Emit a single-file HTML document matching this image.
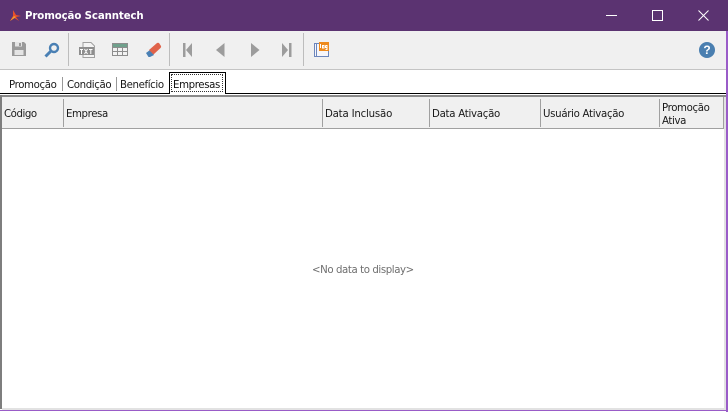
<!DOCTYPE html>
<html><head><meta charset="utf-8">
<style>
html,body{margin:0;padding:0;background:#fff}
#w{position:relative;width:728px;height:412px;overflow:hidden;background:#fff;font-family:"DejaVu Sans","Liberation Sans",sans-serif;font-size:10px;color:#1a1a1a}
.a{position:absolute}
.t{position:absolute;white-space:nowrap;font-size:10.2px;line-height:13px;letter-spacing:-.37px}
.s{position:absolute;width:1px;background:#bdbdbd}
.h{position:absolute;width:1px;background:#a0a0a0;top:99px;height:28px}
svg{position:absolute;overflow:visible}
</style></head><body><div id="w">
<div class="a" style="left:0;top:0;width:728px;height:31px;background:#5b3371"></div>
<svg style="left:9px;top:9px" width="13" height="13" viewBox="0 0 13 13"><path d="M4 1 L7 6 L12 7 L7 8 L10 12 L5.500 9 L1 12 L4 7 Z" fill="#e8502a"/><path d="M1 12 L5 7 L7 8 Z" fill="#f0a030"/></svg>
<div class="t" style="left:25px;top:10px;font-weight:bold;color:#fff;letter-spacing:-.1px">Promoção Scanntech</div>
<div class="a" style="left:606px;top:15px;width:11px;height:1px;background:#fff"></div>
<div class="a" style="left:652px;top:10px;width:9px;height:9px;border:1px solid #fff"></div>
<svg style="left:698px;top:10px" width="11" height="11"><path d="M.5 .5 L10.500 10.500 M10.500 .5 L.5 10.500" stroke="#fff" stroke-width="1" fill="none"/></svg>

<div class="a" style="left:0;top:31px;width:726px;height:38px;background:#f0f0f0"></div>
<div class="a" style="left:0;top:69px;width:726px;height:1px;background:#c4c4c4"></div>
<div class="s" style="left:68px;top:33px;height:33px"></div>
<div class="s" style="left:169px;top:33px;height:33px"></div>
<div class="s" style="left:303px;top:33px;height:33px"></div>

<svg style="left:12px;top:42px" width="15" height="15"><path d="M0 0 H12 L14 2 V14 H0 Z" fill="#9a9a9a"/><rect x="3" y="0" width="7" height="4.500" fill="#e4e4e4"/><rect x="7" y="1" width="2" height="3" fill="#9a9a9a"/><rect x="2.500" y="8" width="9" height="5" fill="#e4e4e4"/></svg>
<svg style="left:44px;top:42px" width="16" height="16"><circle cx="10" cy="6" r="4" fill="none" stroke="#4a80b4" stroke-width="2.400"/><path d="M7 9 L1.500 14.500" stroke="#4a80b4" stroke-width="3" fill="none"/></svg>
<svg style="left:79px;top:42px" width="17" height="16"><path d="M4 .5 H12 L15.500 4 V15.500 H4 Z" fill="#f4f4f4" stroke="#a0a0a0"/><rect x="0" y="5" width="15" height="8" fill="#8e8e8e"/><path d="M1 7.500 H4 M2.500 7.500 V12 M5.500 7 L8.500 12 M8.500 7 L5.500 12 M10 7.500 H13.500 M11.800 7.500 V12" stroke="#fff" stroke-width="1" fill="none"/></svg>
<svg style="left:112px;top:43px" width="16" height="14"><rect x="0" y="0" width="16" height="13" fill="#8d8d8d"/><rect x="1" y="1" width="14" height="3" fill="#6fa08c"/><g fill="#f2f2f2"><rect x="1" y="5" width="4" height="3"/><rect x="6" y="5" width="4" height="3"/><rect x="11" y="5" width="4" height="3"/><rect x="1" y="9" width="4" height="3"/><rect x="6" y="9" width="4" height="3"/><rect x="11" y="9" width="4" height="3"/></g></svg>
<svg style="left:145px;top:42px" width="17" height="16"><path d="M1 11 L5 8 L9 13 L5 15 H3.500 Z" fill="#4a80b4"/><path d="M4 8 L12 1 Q13 .5 14 1 L16 4 Q16.500 5 15.500 6 L8.500 12.500 Z" fill="#e0634a"/></svg>

<svg style="left:183px;top:43px" width="10" height="14"><path d="M0 0 H2.500 V14 H0 Z M9 0 V14 L3 7 Z" fill="#9c9c9c"/></svg>
<svg style="left:216px;top:43px" width="9" height="14"><path d="M8.500 0 V14 L0 7 Z" fill="#9c9c9c"/></svg>
<svg style="left:251px;top:43px" width="9" height="14"><path d="M0 0 V14 L8.500 7 Z" fill="#9c9c9c"/></svg>
<svg style="left:282px;top:43px" width="10" height="14"><path d="M0 0 V14 L6 7 Z M7 0 H9.500 V14 H7 Z" fill="#9c9c9c"/></svg>
<svg style="left:314px;top:42px" width="16" height="16"><rect x=".5" y="1.500" width="14" height="13" fill="#f6f6fa" stroke="#6c86bc"/><path d="M2.500 2 V14" stroke="#6c86bc"/><rect x="5" y="0" width="10" height="9" fill="#ee8a1c"/><path d="M6.500 2 V6 M8.500 3.500 H10 V6 H8.500 Z M11.500 3.500 H13 V7.500 H11.500 M11.500 3.500 V5.500 H13" stroke="#fff" stroke-width="1" fill="none"/></svg>
<div class="a" style="left:699px;top:42px;width:16px;height:16px;border-radius:50%;background:#4a7fb0;color:#fff;font:bold 12px/16px 'Liberation Sans',sans-serif;text-align:center">?</div>

<div class="a" style="left:0;top:93px;width:726px;height:1px;background:#000"></div>
<div class="a" style="left:169px;top:72px;width:55px;height:21px;background:#fff;border:1px solid #000;border-bottom:none;box-sizing:content-box"></div>
<div class="a" style="left:171px;top:74px;width:52px;height:18px;border:1px dotted #333;box-sizing:border-box"></div>
<div class="a" style="left:170px;top:93px;width:55px;height:1px;background:#fff"></div>
<div class="t" style="left:9px;top:79px">Promoção</div>
<div class="a" style="left:62px;top:77px;width:1px;height:14px;background:#999"></div>
<div class="t" style="left:67px;top:79px">Condição</div>
<div class="a" style="left:116px;top:77px;width:1px;height:14px;background:#999"></div>
<div class="t" style="left:120px;top:79px">Benefício</div>
<div class="t" style="left:173px;top:79px;color:#111">Empresas</div>

<div class="a" style="left:0;top:95px;width:726px;height:2px;background:#8a8a8a"></div>
<div class="a" style="left:0;top:97px;width:724px;height:31px;background:#f0f0f0"></div>
<div class="a" style="left:0;top:128px;width:724px;height:1px;background:#a0a0a0"></div>
<div class="a" style="left:0;top:95px;width:2px;height:314px;background:#7e7e7e"></div>
<div class="a" style="left:723px;top:97px;width:1px;height:32px;background:#a0a0a0"></div>
<div class="a" style="left:724px;top:97px;width:2px;height:312px;background:#e2e2e2"></div>
<div class="a" style="left:2px;top:408px;width:724px;height:2px;background:#e2e2e2"></div>
<div class="a" style="left:726px;top:31px;width:2px;height:381px;background:#9a5cc8"></div>
<div class="a" style="left:0;top:410px;width:728px;height:1px;background:#9a5cc8"></div>

<div class="h" style="left:63px"></div>
<div class="h" style="left:322px"></div>
<div class="h" style="left:429px"></div>
<div class="h" style="left:540px"></div>
<div class="h" style="left:659px"></div>
<div class="t" style="left:4px;top:108px;letter-spacing:-.45px">Código</div>
<div class="t" style="left:66px;top:108px;letter-spacing:-.4px">Empresa</div>
<div class="t" style="left:325px;top:108px;letter-spacing:-.2px">Data Inclusão</div>
<div class="t" style="left:432px;top:108px;letter-spacing:-.27px">Data Ativação</div>
<div class="t" style="left:543px;top:108px;letter-spacing:-.3px">Usuário Ativação</div>
<div class="t" style="left:662px;top:102px">Promoção</div>
<div class="t" style="left:662px;top:115px">Ativa</div>
<div class="t" style="left:312px;top:264px;color:#6f6f6f;letter-spacing:-.41px">&lt;No data to display&gt;</div>
</div></body></html>
